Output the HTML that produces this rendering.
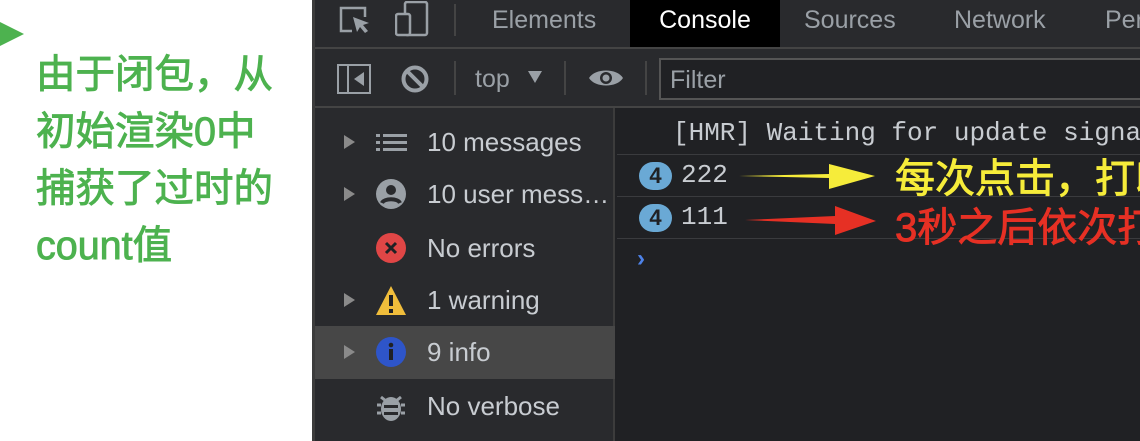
<!DOCTYPE html>
<html><head><meta charset="utf-8"><style>
*{margin:0;padding:0;box-sizing:border-box}
body{width:1140px;height:441px;overflow:hidden;background:#fff;position:relative;font-family:"Liberation Sans","Noto Sans CJK SC",sans-serif}
.abs{position:absolute}
.note{left:36px;top:47px;color:#4db24f;font-size:39.5px;line-height:57px;font-weight:normal;-webkit-text-stroke:0.9px #4db24f;white-space:nowrap}
.dev{left:312px;top:0;width:828px;height:441px;background:#202124;border-left:3px solid #3c3c3c;overflow:hidden}
.tabs{left:0;top:0;width:828px;height:49px;background:#292a2d;border-bottom:2px solid #444}
.tab{top:0;height:47px;line-height:40px;font-size:25px;color:#9aa0a6}
.tb{left:0;top:49px;width:828px;height:59px;background:#292a2d;border-bottom:2px solid #444}
.side{left:0;top:108px;width:300px;height:333px;background:#292a2d;border-right:2px solid #3c3c3c}
.row{left:0;width:300px;height:52px;font-size:26px;color:#c8ccd1;line-height:52px}
.row .t{position:absolute;left:112px;white-space:nowrap}
.tri{position:absolute;left:29px;top:19px;width:0;height:0;border-left:11px solid #8a8a8a;border-top:7px solid transparent;border-bottom:7px solid transparent}
.ic{position:absolute;left:61px;top:11px}
.cl{left:302px;width:526px;border-bottom:1px solid #3a3b3e;font-family:"Liberation Mono",monospace;font-size:26px;color:#c8ccd1;white-space:nowrap;overflow:hidden}
.badge{position:absolute;left:22px;width:33px;height:28px;border-radius:14px;background:#6aa9d5;color:#202124;font-family:"Liberation Sans";font-weight:bold;font-size:22px;text-align:center;line-height:28px}
.ann{font-family:"Liberation Sans","Noto Sans CJK SC",sans-serif;font-size:40px;font-weight:normal;position:absolute;left:278px;white-space:nowrap}
</style></head><body>
<div class="abs" style="left:0;top:22px;width:0;height:0;border-left:24px solid #4db24f;border-top:12px solid transparent;border-bottom:12px solid transparent"></div>
<div class="abs note">由于闭包，从<br>初始渲染0中<br>捕获了过时的<br>count值</div>
<div class="abs dev">
 <div class="abs tabs">
  <svg class="abs" style="left:23px;top:5px" width="36" height="32" viewBox="0 0 36 32" fill="none" stroke="#9aa0a6" stroke-width="2.5"><path d="M14 26H3V3h24v9"/><path d="M15 12l16 6-6 2 5 6-3 2-5-6-3 5z" fill="#9aa0a6" stroke="none"/></svg>
  <svg class="abs" style="left:80px;top:1px" width="36" height="36" viewBox="0 0 36 36" fill="none" stroke="#9aa0a6" stroke-width="2.5"><rect x="10" y="1" width="22" height="33" rx="2"/><rect x="1" y="13" width="14" height="21" rx="2" fill="#292a2d"/></svg>
  <div class="abs" style="left:139px;top:4px;width:2px;height:32px;background:#444"></div>
  <div class="abs tab" style="left:177px">Elements</div>
  <div class="abs tab" style="left:315px;width:150px;background:#000;color:#fff;text-align:center">Console</div>
  <div class="abs tab" style="left:489px">Sources</div>
  <div class="abs tab" style="left:639px">Network</div>
  <div class="abs tab" style="left:790px">Per</div>
 </div>
 <div class="abs tb">
  <svg class="abs" style="left:22px;top:15px" width="36" height="30" viewBox="0 0 36 30" fill="none" stroke="#9aa0a6" stroke-width="2"><rect x="1" y="1" width="32" height="28"/><path d="M11 1v28"/><path d="M27 8v14l-10-7z" fill="#9aa0a6" stroke="none"/></svg>
  <svg class="abs" style="left:85px;top:15px" width="30" height="30" viewBox="0 0 30 30" fill="none" stroke="#9aa0a6" stroke-width="4"><circle cx="15" cy="15" r="11.5"/><path d="M7 7l16 16"/></svg>
  <div class="abs" style="left:139px;top:12px;width:2px;height:34px;background:#444"></div>
  <div class="abs" style="left:160px;top:16px;font-size:25px;color:#9aa0a6">top</div>
  <div class="abs" style="left:213px;top:22px;border-top:12px solid #9aa0a6;border-left:7px solid transparent;border-right:7px solid transparent"></div>
  <div class="abs" style="left:249px;top:12px;width:2px;height:34px;background:#444"></div>
  <svg class="abs" style="left:273px;top:18px" width="36" height="22" viewBox="0 0 36 22"><path d="M1 11C7 1 29 1 35 11C29 21 7 21 1 11z" fill="#9aa0a6"/><circle cx="18" cy="11" r="6" fill="#292a2d"/><circle cx="18" cy="11" r="3.5" fill="#9aa0a6"/></svg>
  <div class="abs" style="left:330px;top:12px;width:2px;height:34px;background:#444"></div>
  <div class="abs" style="left:344px;top:9px;width:490px;height:42px;border:2px solid #555;background:#202124;font-size:25px;color:#9aa0a6;padding:6px 0 0 9px">Filter</div>
 </div>
 <div class="abs side">
  <div class="abs row" style="top:8px"><div class="tri"></div>
   <svg class="ic" width="32" height="30" viewBox="0 0 32 30" fill="#9aa0a6"><rect x="0" y="7" width="4" height="3"/><rect x="7" y="7" width="24" height="3"/><rect x="0" y="14" width="4" height="3"/><rect x="7" y="14" width="24" height="3"/><rect x="0" y="21" width="4" height="3"/><rect x="7" y="21" width="24" height="3"/></svg>
   <span class="t">10 messages</span></div>
  <div class="abs row" style="top:60px"><div class="tri"></div>
   <svg class="ic" width="32" height="32" viewBox="0 0 32 32"><circle cx="15" cy="15" r="15" fill="#9aa0a6"/><circle cx="15" cy="11" r="5" fill="#292a2d"/><path d="M6 24c2-5 16-5 18 0" stroke="#292a2d" stroke-width="4" fill="none"/></svg>
   <span class="t">10 user mess…</span></div>
  <div class="abs row" style="top:114px">
   <svg class="ic" width="32" height="32" viewBox="0 0 32 32"><circle cx="15" cy="15" r="15" fill="#e04646"/><path d="M10 10l10 10M20 10l-10 10" stroke="#202124" stroke-width="3"/></svg>
   <span class="t">No errors</span></div>
  <div class="abs row" style="top:166px"><div class="tri"></div>
   <svg class="ic" width="32" height="32" viewBox="0 0 32 32"><path d="M15 1L30 30H0z" fill="#f0bd3b"/><rect x="13" y="10" width="4" height="11" fill="#202124"/><rect x="13" y="24" width="4" height="4" fill="#202124"/></svg>
   <span class="t">1 warning</span></div>
  <div class="abs row" style="top:218px;background:#474747;height:53px"><div class="tri"></div>
   <svg class="ic" width="32" height="32" viewBox="0 0 32 32"><circle cx="15" cy="15" r="15" fill="#2e55c9"/><rect x="13" y="12" width="4" height="11" fill="#202124"/><circle cx="15" cy="8" r="2.3" fill="#202124"/></svg>
   <span class="t">9 info</span></div>
  <div class="abs row" style="top:272px">
   <svg class="ic" width="32" height="32" viewBox="0 0 32 32" fill="#9aa0a6"><ellipse cx="15" cy="18" rx="10" ry="12"/><path d="M5 6l5 4M25 6l-5 4M1 14h4M25 14h4M1 22h4M25 22h4" stroke="#9aa0a6" stroke-width="3"/><rect x="8" y="14" width="14" height="3" fill="#292a2d"/><rect x="8" y="21" width="14" height="3" fill="#292a2d"/></svg>
   <span class="t">No verbose</span></div>
 </div>
 <div class="abs cl" style="top:108px;height:47px"><span style="position:absolute;left:56px;top:10px">[HMR] Waiting for update signal</span></div>
 <div class="abs cl" style="top:155px;height:42px;overflow:visible"><div class="badge" style="top:7px">4</div><span style="position:absolute;left:64px;top:5px">222</span>
  <svg class="abs" style="left:120px;top:5px" width="150" height="32"><path d="M2 16L92 14V4l46 12-46 13V18z" fill="#f6ec3a"/></svg>
  <span class="ann" style="color:#f6ec3a;top:-9px;-webkit-text-stroke:0.9px #f6ec3a">每次点击，打印</span></div>
 <div class="abs cl" style="top:197px;height:42px;overflow:visible"><div class="badge" style="top:7px">4</div><span style="position:absolute;left:64px;top:5px">111</span>
  <svg class="abs" style="left:126px;top:5px" width="150" height="34"><path d="M2 18L92 14V4l41 15-41 14V22z" fill="#e63024"/></svg>
  <span class="ann" style="color:#e63024;top:-2px;-webkit-text-stroke:0.9px #e63024">3秒之后依次打</span></div>
 <div class="abs" style="left:322px;top:245px;color:#4d82e8;font-size:24px;font-weight:bold">›</div>
</div>
</body></html>
